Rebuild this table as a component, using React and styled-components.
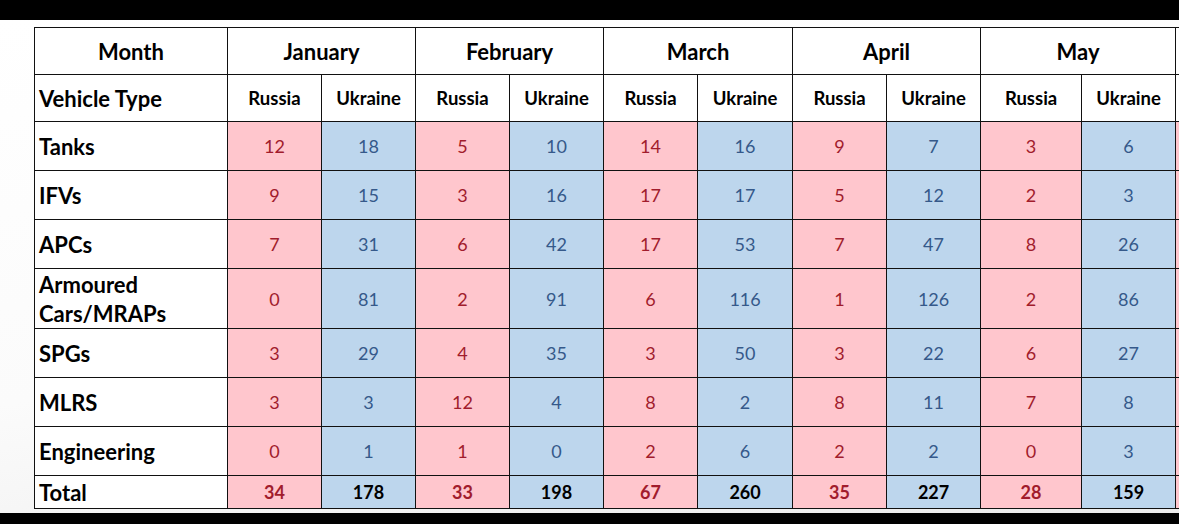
import React from "react";
import styled, { createGlobalStyle } from "styled-components";

const GlobalStyle = createGlobalStyle`
  html, body {
    margin: 0;
    padding: 0;
    overflow: hidden;
    background: #000;
  }
  * {
    box-sizing: border-box;
  }
`;

const months = ["January", "February", "March", "April", "May"];

const rows = [
  { label: "Tanks", values: [12, 18, 5, 10, 14, 16, 9, 7, 3, 6] },
  { label: "IFVs", values: [9, 15, 3, 16, 17, 17, 5, 12, 2, 3] },
  { label: "APCs", values: [7, 31, 6, 42, 17, 53, 7, 47, 8, 26] },
  { label: "Armoured Cars/MRAPs", values: [0, 81, 2, 91, 6, 116, 1, 126, 2, 86], tall: true },
  { label: "SPGs", values: [3, 29, 4, 35, 3, 50, 3, 22, 6, 27] },
  { label: "MLRS", values: [3, 3, 12, 4, 8, 2, 8, 11, 7, 8] },
  { label: "Engineering", values: [0, 1, 1, 0, 2, 6, 2, 2, 0, 3] },
];

const totals = [34, 178, 33, 198, 67, 260, 35, 227, 28, 159];

// column widths in px, the last month pair is a little wider on the Russia side
const colWidths = [193, 94, 94, 94, 94, 94, 95, 94, 94, 101, 94, 100, 100];

const App = () => {
  return (
    <>
      <GlobalStyle />
      <Page>
        <Bar $height={20} />
        <Stage>
          <Table>
            <colgroup>
              {colWidths.map((w, i) => (
                <col key={i} style={{ width: w }} />
              ))}
            </colgroup>
            <thead>
              <HeadRow>
                <MonthCell>Month</MonthCell>
                {months.map(m => (
                  <MonthCell key={m} colSpan={2}>
                    {m}
                  </MonthCell>
                ))}
                <MonthCell colSpan={2} />
              </HeadRow>
              <HeadRow>
                <LabelHead>Vehicle Type</LabelHead>
                {months.map(m => (
                  <React.Fragment key={m}>
                    <SideHead>Russia</SideHead>
                    <SideHead>Ukraine</SideHead>
                  </React.Fragment>
                ))}
                <SideHead />
                <SideHead />
              </HeadRow>
            </thead>
            <tbody>
              {rows.map(row => (
                <DataRow key={row.label} $tall={row.tall}>
                  <Label $tall={row.tall}>{row.label}</Label>
                  {row.values.map((v, i) => (
                    <Value key={i} $side={i % 2 === 0 ? "ru" : "ua"}>
                      {v}
                    </Value>
                  ))}
                  <Value $side='ru' />
                  <Value $side='ua' />
                </DataRow>
              ))}
              <TotalRow>
                <Label>Total</Label>
                {totals.map((v, i) => (
                  <Value key={i} $side={i % 2 === 0 ? "ru" : "ua"} $total>
                    {v}
                  </Value>
                ))}
                <Value $side='ru' $total />
                <Value $side='ua' $total />
              </TotalRow>
            </tbody>
          </Table>
        </Stage>
        <Bar $height={11} />
      </Page>
    </>
  );
};

export default App;

const Page = styled.div`
  width: 1179px;
  height: 524px;
  display: flex;
  flex-direction: column;
  overflow: hidden;
  font-family: Lato, "Liberation Sans", sans-serif;
`;

const Bar = styled.div`
  height: ${p => p.$height}px;
  flex: 0 0 ${p => p.$height}px;
  background: #000;
`;

const Stage = styled.div`
  flex: 1;
  padding: 7px 0 0 34px;
  overflow: hidden;
  background: linear-gradient(170deg, #ffffff 0%, #fbfbfb 55%, #ececec 100%);
`;

const Table = styled.table`
  border-collapse: collapse;
  table-layout: fixed;
  width: 1241px;
  color: #000;
  td,
  th {
    border: 1px solid #111;
    padding: 0;
  }
`;

const HeadRow = styled.tr`
  height: 47px;
  background: #fff;
`;

const MonthCell = styled.th`
  font-size: 22px;
  font-weight: 700;
  text-align: center;
  vertical-align: middle;
`;

const LabelHead = styled.th`
  font-size: 22px;
  font-weight: 700;
  text-align: left;
  padding-left: 4px !important;
`;

const SideHead = styled.th`
  font-size: 18.5px;
  font-weight: 700;
  text-align: center;
`;

const DataRow = styled.tr`
  height: ${p => (p.$tall ? 60 : 49)}px;
`;

const TotalRow = styled.tr`
  height: 33px;
`;

const Label = styled.td`
  background: #fff;
  font-size: 22px;
  font-weight: 700;
  line-height: ${p => (p.$tall ? "29px" : "normal")};
  padding: 0 0 0 4px !important;
  text-align: left;
  vertical-align: middle;
`;

const Value = styled.td`
  background: ${p => (p.$side === "ru" ? "#ffc6cd" : "#bdd6ed")};
  color: ${p =>
    p.$side === "ru" ? "#a11c2c" : p.$total ? "#000" : "#35598a"};
  font-size: 18px;
  font-weight: ${p => (p.$total ? 700 : 400)};
  text-align: center;
  vertical-align: middle;
`;
